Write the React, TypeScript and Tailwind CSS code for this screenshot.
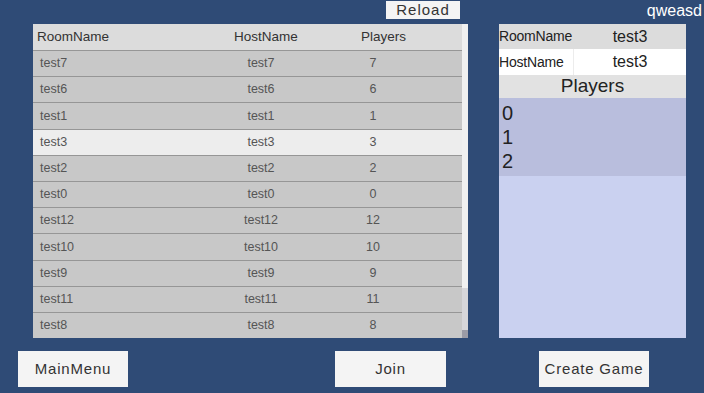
import React from "react";

const rows = [
  ["test7", "test7", "7"],
  ["test6", "test6", "6"],
  ["test1", "test1", "1"],
  ["test3", "test3", "3"],
  ["test2", "test2", "2"],
  ["test0", "test0", "0"],
  ["test12", "test12", "12"],
  ["test10", "test10", "10"],
  ["test9", "test9", "9"],
  ["test11", "test11", "11"],
  ["test8", "test8", "8"],
];

export default function App() {
  return (
    <div
      className="w-[704px] h-[393px] bg-[#2f4b76] overflow-hidden flex flex-col"
      style={{ fontFamily: '"Liberation Sans", Arial, sans-serif' }}
    >
      {/* top bar */}
      <div className="h-[24px] flex items-start">
        <button className="ml-[386px] mt-[1px] w-[74px] h-[18px] bg-[#f4f4f4] text-[#333] text-[15px] tracking-[1px] leading-[18px] flex items-center justify-center">
          Reload
        </button>
        <div className="ml-auto mr-[2px] mt-[1px] text-white text-[16px] leading-[20px]">qweasd</div>
      </div>

      {/* middle */}
      <div className="h-[314px] flex">
        {/* table */}
        <div className="ml-[33px] w-[435px] flex">
          <div className="w-[429px] flex flex-col">
            <div className="h-[26px] bg-[#dcdcdc] flex items-center text-[13.5px] text-[#333]">
              <div className="w-[201px] pl-[4px]">RoomName</div>
              <div className="w-[127px]">HostName</div>
              <div>Players</div>
            </div>
            {rows.map((r, i) => (
              <div
                key={i}
                className={
                  "flex-1 flex items-center text-[12.5px] text-[#555] border-t-[1.5px] border-[#969696] " +
                  (r[0] === "test3" ? "bg-[#ededed] text-[#444]" : "bg-[#c8c8c8]")
                }
              >
                <div className="w-[188px] pl-[7px]">{r[0]}</div>
                <div className="w-[80px] text-center">{r[1]}</div>
                <div className="ml-[32px] w-[80px] text-center">{r[2]}</div>
              </div>
            ))}
          </div>
          <div className="w-[6px] flex flex-col">
            <div className="flex-1 bg-[#f0f0f0]" />
            <div className="h-[42px] bg-[#d6d6da]" />
            <div className="h-[8px] bg-[#9c9ca6]" />
          </div>
        </div>

        {/* right panel */}
        <div className="ml-[31px] w-[187px] flex flex-col">
          <div className="h-[25px] bg-[#dcdcdc] flex items-center">
            <div className="w-[75px] text-[14px] text-[#222] tracking-[-0.2px]">RoomName</div>
            <div className="flex-1 text-center text-[16px] text-[#222]">test3</div>
          </div>
          <div className="h-[26px] bg-white flex items-center">
            <div className="w-[75px] h-full flex items-center border-r border-[#ececec] text-[14px] text-[#222] tracking-[-0.2px]">
              HostName
            </div>
            <div className="flex-1 text-center text-[16px] text-[#222]">test3</div>
          </div>
          <div className="h-[23px] bg-[#e2e2e2] flex items-center justify-center text-[19px] text-[#222]">
            Players
          </div>
          <div className="h-[78px] bg-[#b9bedd] pl-[3px] pt-[3px] text-[20px] leading-[24px] text-[#222]">
            <div>0</div>
            <div>1</div>
            <div>2</div>
          </div>
          <div className="flex-1 bg-[#cad1f0]" />
        </div>
      </div>

      {/* bottom buttons */}
      <div className="mt-[13px] flex">
        <button className="ml-[18px] w-[110px] h-[36px] bg-[#f4f4f4] text-[#333] text-[15px] tracking-[0.8px]">
          MainMenu
        </button>
        <button className="ml-[207px] w-[111px] h-[36px] bg-[#f4f4f4] text-[#333] text-[15px] tracking-[0.8px]">
          Join
        </button>
        <button className="ml-[93px] w-[110px] h-[36px] bg-[#f4f4f4] text-[#333] text-[15px] tracking-[0.8px]">
          Create Game
        </button>
      </div>
    </div>
  );
}
